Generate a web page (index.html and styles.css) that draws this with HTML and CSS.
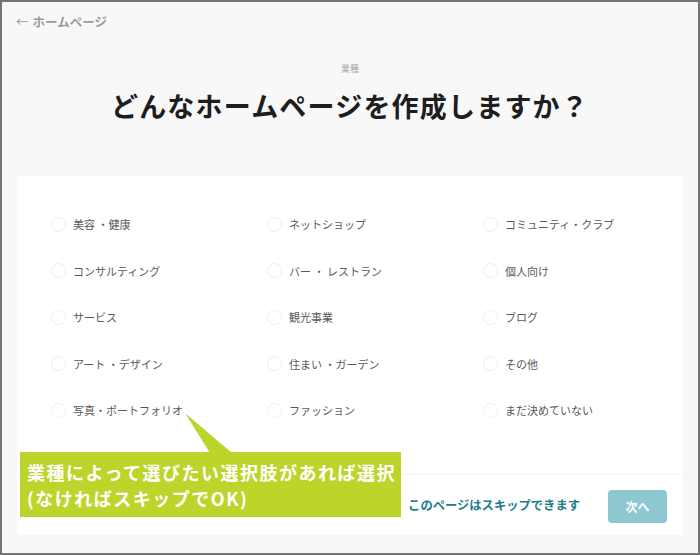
FILE: index.html
```html
<!DOCTYPE html>
<html lang="ja">
<head>
  <meta charset="UTF-8" />
  <meta name="viewport" content="width=device-width, initial-scale=1.0"/>
  <title>どんなホームページを作成しますか？</title>
  <link rel="stylesheet" href="styles.css">
</head>
<body>
  <div class="frame">
    <a class="back" href="#"><span class="arrow">&larr;</span>ホームページ</a>

    <div class="heading">
      <div class="step-label">業種</div>
      <h1 class="title">どんなホームページを作成しますか？</h1>
    </div>

    <div class="card">
      <div class="options">
        <label class="option"><span class="radio"></span>美容 ・健康</label>
        <label class="option"><span class="radio"></span>ネットショップ</label>
        <label class="option"><span class="radio"></span>コミュニティ・クラブ</label>
        <label class="option"><span class="radio"></span>コンサルティング</label>
        <label class="option"><span class="radio"></span>バー ・ レストラン</label>
        <label class="option"><span class="radio"></span>個人向け</label>
        <label class="option"><span class="radio"></span>サービス</label>
        <label class="option"><span class="radio"></span>観光事業</label>
        <label class="option"><span class="radio"></span>ブログ</label>
        <label class="option"><span class="radio"></span>アート ・デザイン</label>
        <label class="option"><span class="radio"></span>住まい ・ガーデン</label>
        <label class="option"><span class="radio"></span>その他</label>
        <label class="option"><span class="radio"></span>写真・ポートフォリオ</label>
        <label class="option"><span class="radio"></span>ファッション</label>
        <label class="option"><span class="radio"></span>まだ決めていない</label>
      </div>

      <div class="card-footer">
        <a class="skip" href="#">このページはスキップできます</a>
        <button class="next">次へ</button>
      </div>
    </div>

    <div class="callout">
      <div class="callout-line">業種によって選びたい選択肢があれば選択</div>
      <div class="callout-line">(なければスキップでOK)</div>
    </div>
  </div>
</body>
</html>
```

FILE: styles.css
```css
* {
  box-sizing: border-box;
}

body {
  margin: 0;
  padding: 0;
  font-family: 'Noto Sans CJK JP', 'Noto Sans', sans-serif;
  background-color: #ffffff;
}

.frame {
  width: 700px;
  height: 555px;
  border: 2px solid #737373;
  background-color: #f8f8f8;
  position: relative;
  overflow: hidden;
}

.back {
  display: block;
  padding: 10px 14px 0;
  line-height: 20px;
  font-size: 12.5px;
  font-weight: bold;
  color: #9a9a9a;
  text-decoration: none;
}

.back .arrow {
  font-weight: normal;
  margin-right: 4px;
}

.heading {
  text-align: center;
  margin-top: 30px;
}

.step-label {
  font-size: 9px;
  line-height: 14px;
  color: #a8a8a8;
}

.title {
  margin: 12px 0 0;
  font-size: 27px;
  line-height: 36px;
  font-weight: bold;
  color: #1e1e1e;
  letter-spacing: 1.2px;
}

.card {
  margin: 52px 15px 0;
  height: 359px;
  background-color: #ffffff;
  display: flex;
  flex-direction: column;
}

.options {
  display: grid;
  grid-template-columns: 216px 216px 216px;
  grid-auto-rows: 46.5px;
  padding: 25px 0 0 34px;
  height: 298px;
}

.option {
  display: flex;
  align-items: center;
  gap: 7px;
  font-size: 11px;
  color: #595959;
}

.radio {
  width: 15px;
  height: 15px;
  border-radius: 50%;
  border: 1px solid #ededed;
  background-color: #ffffff;
}

.card-footer {
  border-top: 1px solid #f3f3f3;
  flex: 1;
  display: flex;
  align-items: center;
  justify-content: flex-end;
  padding-right: 16px;
  gap: 28px;
}

.skip {
  font-size: 12.3px;
  font-weight: bold;
  color: #1b7d8a;
  text-decoration: none;
}

.next {
  width: 59px;
  height: 33px;
  border: none;
  border-radius: 4px;
  background-color: #8dc7cf;
  color: #ffffff;
  font-family: inherit;
  font-size: 12px;
  font-weight: bold;
  margin-top: 2px;
}

.callout {
  position: absolute;
  left: 18px;
  top: 450px;
  width: 381px;
  height: 65px;
  padding: 7px 0 0 7px;
  background-color: #bdd42b;
  color: #ffffff;
  font-size: 18px;
  font-weight: bold;
  white-space: nowrap;
}

.callout-line {
  height: 26px;
  line-height: 26px;
  letter-spacing: 1.5px;
}

.callout::before {
  content: '';
  position: absolute;
  left: 165px;
  top: -39px;
  width: 47px;
  height: 40px;
  background-color: #bdd42b;
  clip-path: polygon(0 0, 47px 40px, 25px 40px);
}
```
